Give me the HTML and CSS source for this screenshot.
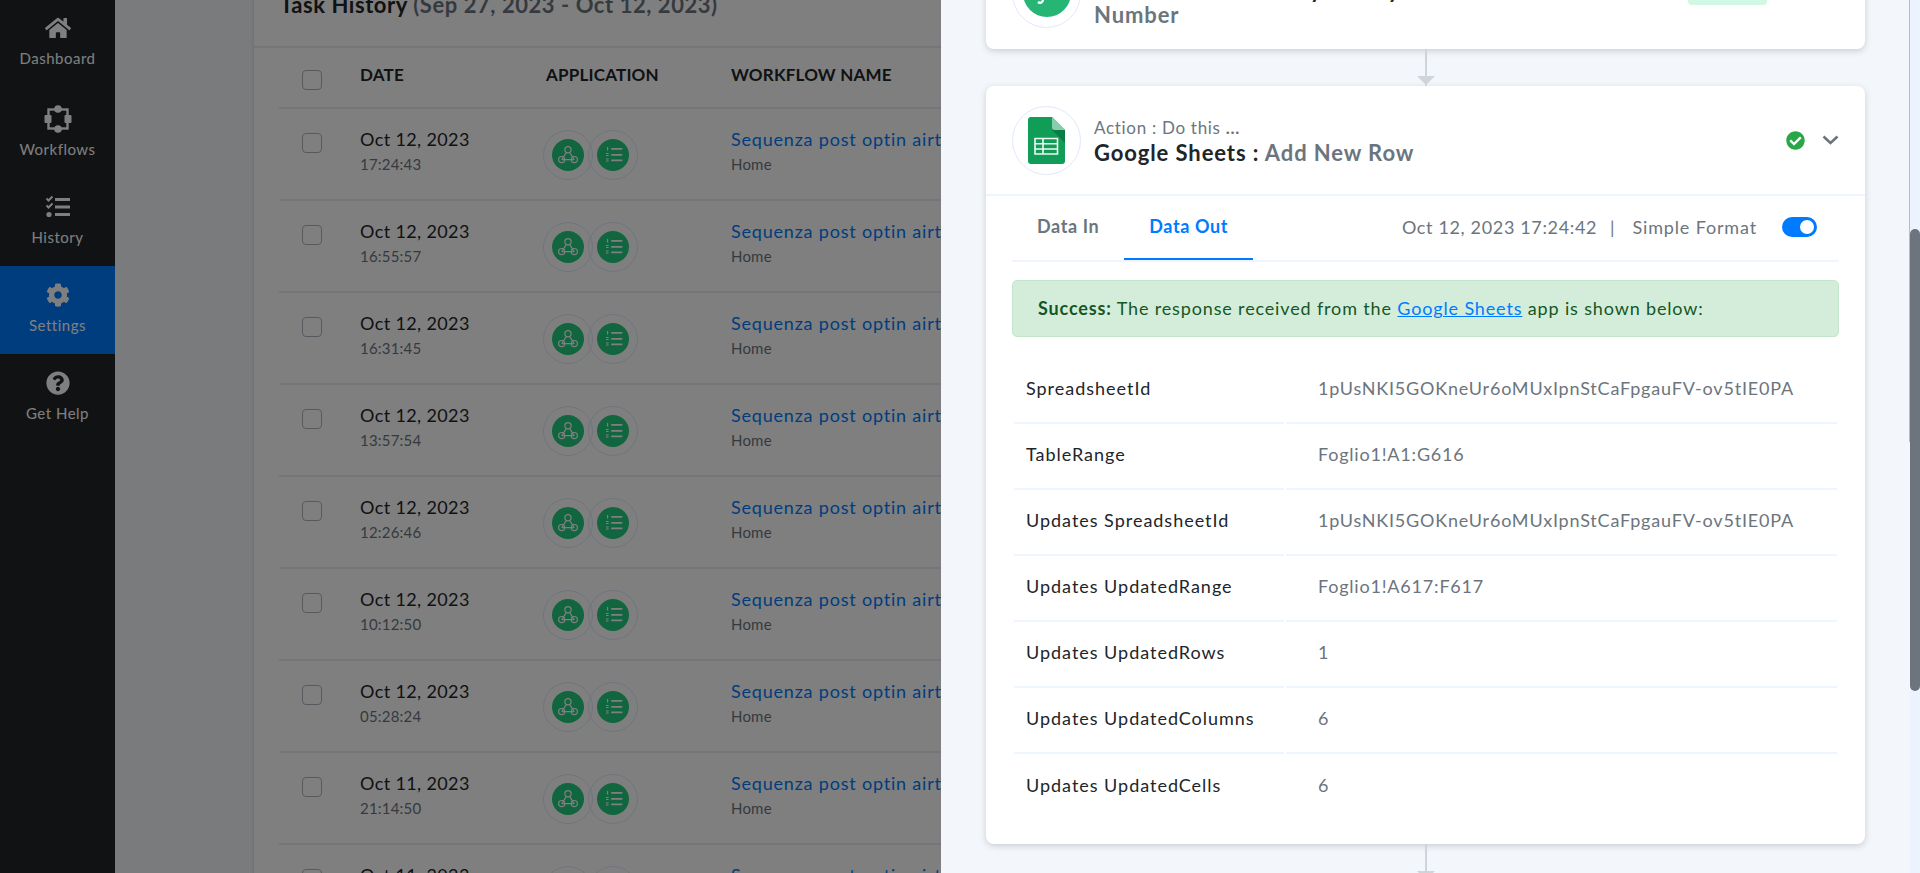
FILE: index.html
```html
<!DOCTYPE html>
<html lang="en">
<head>
    <meta charset="UTF-8">
    <meta name="viewport" content="width=device-width, initial-scale=1.0">
    <title>Task History</title>
    <link rel="stylesheet" href="styles.css">
</head>
<body>
    <svg class="defs" aria-hidden="true">
        <symbol id="i-webhook" viewBox="0 0 32 32">
            <g fill="none" stroke="currentColor" stroke-width="1.2">
                <circle cx="16" cy="10.8" r="3.1"/>
                <circle cx="9.7" cy="20.6" r="3.1"/>
                <circle cx="22.3" cy="20.6" r="3.1"/>
                <path d="M14.4 13.5 9.7 20.6M17.6 13.5 22.3 20.6M9.7 20.6H22.3"/>
            </g>
        </symbol>
        <symbol id="i-list" viewBox="0 0 32 32">
            <g fill="currentColor">
                <rect x="14" y="9" width="11.5" height="1.7" rx="0.8"/>
                <rect x="14" y="15" width="11.5" height="1.7" rx="0.8"/>
                <rect x="14" y="20.5" width="11.5" height="1.7" rx="0.8"/>
                <rect x="10" y="8" width="1.2" height="3.5"/>
                <rect x="9" y="14" width="2.6" height="1"/>
                <rect x="9" y="16" width="2.6" height="1"/>
                <rect x="9" y="19.5" width="2.6" height="1"/>
                <rect x="9" y="21.5" width="2.6" height="1"/>
            </g>
        </symbol>
    </svg>

    <div class="page">
        <nav class="sidebar">
            <a class="nav-item">
                <svg class="nav-icon home" viewBox="0 0 576 512"><path d="M280.37 148.26L96 300.11V464a16 16 0 0 0 16 16l112.06-.29a16 16 0 0 0 15.92-16V368a16 16 0 0 1 16-16h64a16 16 0 0 1 16 16v95.64a16 16 0 0 0 16 16.05L464 480a16 16 0 0 0 16-16V300L295.67 148.26a12.19 12.19 0 0 0-15.3 0zM571.6 251.47L488 182.56V44.05a12 12 0 0 0-12-12h-56a12 12 0 0 0-12 12v72.61L318.47 43a48 48 0 0 0-61 0L4.34 251.47a12 12 0 0 0-1.6 16.9l25.5 31A12 12 0 0 0 45.15 301l235.22-193.74a12.19 12.19 0 0 1 15.3 0L530.9 301a12 12 0 0 0 16.9-1.6l25.5-31a12 12 0 0 0-1.7-16.93z"/></svg>
                <span>Dashboard</span>
            </a>
            <a class="nav-item">
                <svg class="nav-icon big" viewBox="0 0 28 28">
                    <rect x="4.5" y="4.5" width="19" height="19" fill="none" stroke="currentColor" stroke-width="2.4"/>
                    <circle cx="14" cy="4" r="3.8"/>
                    <circle cx="14" cy="24" r="3.8"/>
                    <rect x="0.5" y="10" width="7" height="8" rx="1"/>
                    <rect x="20.5" y="10" width="7" height="8" rx="1"/>
                </svg>
                <span>Workflows</span>
            </a>
            <a class="nav-item">
                <svg class="nav-icon" viewBox="0 0 26 24">
                    <rect x="10" y="3" width="15" height="3"/>
                    <rect x="10" y="10.5" width="15" height="3"/>
                    <rect x="10" y="18" width="15" height="3"/>
                    <path d="M1.5 3.5 3.5 5.5 7.5 1.5M1.5 10.5 3.5 12.5 7.5 8.5" fill="none" stroke="currentColor" stroke-width="2"/>
                    <circle cx="4" cy="19.5" r="2.6"/>
                </svg>
                <span>History</span>
            </a>
            <a class="nav-item active">
                <svg class="nav-icon" viewBox="0 0 512 512"><path d="M487.4 315.7l-42.6-24.6c4.3-23.2 4.3-47 0-70.2l42.6-24.6c4.9-2.8 7.1-8.6 5.5-14-11.1-35.6-30-67.8-54.7-94.6-3.8-4.1-10-5.1-14.8-2.3L380.8 110c-17.9-15.4-38.5-27.3-60.8-35.1V25.8c0-5.6-3.9-10.5-9.4-11.7-36.7-8.2-74.3-7.8-109.2 0-5.5 1.2-9.4 6.1-9.4 11.7V75c-22.2 7.9-42.8 19.8-60.8 35.1L88.7 85.5c-4.9-2.8-11-1.9-14.8 2.3-24.7 26.7-43.6 58.9-54.7 94.6-1.7 5.4.6 11.2 5.5 14L67.3 221c-4.3 23.2-4.3 47 0 70.2l-42.6 24.6c-4.9 2.8-7.1 8.6-5.5 14 11.1 35.6 30 67.8 54.7 94.6 3.8 4.1 10 5.1 14.8 2.3l42.6-24.6c17.9 15.4 38.5 27.3 60.8 35.1v49.2c0 5.6 3.9 10.5 9.4 11.7 36.7 8.2 74.3 7.8 109.2 0 5.5-1.2 9.4-6.1 9.4-11.7v-49.2c22.2-7.9 42.8-19.8 60.8-35.1l42.6 24.6c4.9 2.8 11 1.9 14.8-2.3 24.7-26.7 43.6-58.9 54.7-94.6 1.5-5.5-.7-11.3-5.6-14.1zM256 336c-44.1 0-80-35.9-80-80s35.9-80 80-80 80 35.9 80 80-35.9 80-80 80z"/></svg>
                <span>Settings</span>
            </a>
            <a class="nav-item">
                <svg class="nav-icon" viewBox="0 0 512 512"><path d="M504 256c0 136.997-111.043 248-248 248S8 392.997 8 256C8 119.083 119.043 8 256 8s248 111.083 248 248zM262.655 90c-54.497 0-89.255 22.957-116.549 63.758-3.536 5.286-2.353 12.415 2.715 16.258l34.699 26.31c5.205 3.947 12.621 3.008 16.665-2.122 17.864-22.658 30.113-35.797 57.303-35.797 20.429 0 45.698 13.148 45.698 32.958 0 14.976-12.363 22.667-32.534 33.976C247.128 238.528 216 254.941 216 296v4c0 6.627 5.373 12 12 12h56c6.627 0 12-5.373 12-12v-1.333c0-28.462 83.186-29.647 83.186-106.667 0-58.002-60.165-102-116.531-102zM256 338c-25.365 0-46 20.635-46 46 0 25.364 20.635 46 46 46s46-20.636 46-46c0-25.365-20.635-46-46-46z"/></svg>
                <span>Get Help</span>
            </a>
        </nav>

        <main class="content">
            <section class="history-card">
                <h2 class="history-title">Task History <span>(Sep 27, 2023 - Oct 12, 2023)</span></h2>
                <div class="history-list">
                    <div class="history-row head">
                        <span class="box"></span>
                        <span>DATE</span>
                        <span class="app-head">APPLICATION</span>
                        <span>WORKFLOW NAME</span>
                    </div>

                    <div class="history-row">
                        <span class="box"></span>
                        <div><div class="date">Oct 12, 2023</div><div class="sub">17:24:43</div></div>
                        <div class="apps">
                            <span class="app"><svg class="app-dot"><use href="#i-webhook"/></svg></span>
                            <span class="app"><svg class="app-dot"><use href="#i-list"/></svg></span>
                        </div>
                        <div><a class="flow">Sequenza post optin airtable</a><div class="sub">Home</div></div>
                    </div>
                    <div class="history-row">
                        <span class="box"></span>
                        <div><div class="date">Oct 12, 2023</div><div class="sub">16:55:57</div></div>
                        <div class="apps">
                            <span class="app"><svg class="app-dot"><use href="#i-webhook"/></svg></span>
                            <span class="app"><svg class="app-dot"><use href="#i-list"/></svg></span>
                        </div>
                        <div><a class="flow">Sequenza post optin airtable</a><div class="sub">Home</div></div>
                    </div>
                    <div class="history-row">
                        <span class="box"></span>
                        <div><div class="date">Oct 12, 2023</div><div class="sub">16:31:45</div></div>
                        <div class="apps">
                            <span class="app"><svg class="app-dot"><use href="#i-webhook"/></svg></span>
                            <span class="app"><svg class="app-dot"><use href="#i-list"/></svg></span>
                        </div>
                        <div><a class="flow">Sequenza post optin airtable</a><div class="sub">Home</div></div>
                    </div>
                    <div class="history-row">
                        <span class="box"></span>
                        <div><div class="date">Oct 12, 2023</div><div class="sub">13:57:54</div></div>
                        <div class="apps">
                            <span class="app"><svg class="app-dot"><use href="#i-webhook"/></svg></span>
                            <span class="app"><svg class="app-dot"><use href="#i-list"/></svg></span>
                        </div>
                        <div><a class="flow">Sequenza post optin airtable</a><div class="sub">Home</div></div>
                    </div>
                    <div class="history-row">
                        <span class="box"></span>
                        <div><div class="date">Oct 12, 2023</div><div class="sub">12:26:46</div></div>
                        <div class="apps">
                            <span class="app"><svg class="app-dot"><use href="#i-webhook"/></svg></span>
                            <span class="app"><svg class="app-dot"><use href="#i-list"/></svg></span>
                        </div>
                        <div><a class="flow">Sequenza post optin airtable</a><div class="sub">Home</div></div>
                    </div>
                    <div class="history-row">
                        <span class="box"></span>
                        <div><div class="date">Oct 12, 2023</div><div class="sub">10:12:50</div></div>
                        <div class="apps">
                            <span class="app"><svg class="app-dot"><use href="#i-webhook"/></svg></span>
                            <span class="app"><svg class="app-dot"><use href="#i-list"/></svg></span>
                        </div>
                        <div><a class="flow">Sequenza post optin airtable</a><div class="sub">Home</div></div>
                    </div>
                    <div class="history-row">
                        <span class="box"></span>
                        <div><div class="date">Oct 12, 2023</div><div class="sub">05:28:24</div></div>
                        <div class="apps">
                            <span class="app"><svg class="app-dot"><use href="#i-webhook"/></svg></span>
                            <span class="app"><svg class="app-dot"><use href="#i-list"/></svg></span>
                        </div>
                        <div><a class="flow">Sequenza post optin airtable</a><div class="sub">Home</div></div>
                    </div>
                    <div class="history-row">
                        <span class="box"></span>
                        <div><div class="date">Oct 11, 2023</div><div class="sub">21:14:50</div></div>
                        <div class="apps">
                            <span class="app"><svg class="app-dot"><use href="#i-webhook"/></svg></span>
                            <span class="app"><svg class="app-dot"><use href="#i-list"/></svg></span>
                        </div>
                        <div><a class="flow">Sequenza post optin airtable</a><div class="sub">Home</div></div>
                    </div>
                    <div class="history-row">
                        <span class="box"></span>
                        <div><div class="date">Oct 11, 2023</div><div class="sub">20:47:12</div></div>
                        <div class="apps">
                            <span class="app"><svg class="app-dot"><use href="#i-webhook"/></svg></span>
                            <span class="app"><svg class="app-dot"><use href="#i-list"/></svg></span>
                        </div>
                        <div><a class="flow">Sequenza post optin airtable</a><div class="sub">Home</div></div>
                    </div>
                </div>
            </section>
        </main>
    </div>

    <div class="overlay"></div>

    <aside class="panel">
        <div class="panel-body">
            <section class="step first">
                <header class="step-head">
                    <span class="step-logo">
                        <svg class="trigger-logo" viewBox="0 0 48 48">
                            <circle cx="24" cy="24" r="24" fill="#26b574"/>
                            <path d="M20 26v5a3 3 0 0 1-5 2" fill="none" stroke="#fff" stroke-width="2.4"/>
                            <rect x="24" y="29" width="11" height="2" fill="#fff"/>
                        </svg>
                    </span>
                    <div class="step-text">
                        <div class="step-kind">Action : Do this <b>...</b></div>
                        <div class="step-name">Number Formatter by Pabbly : <span>Format Phone Number</span></div>
                    </div>
                    <span class="badge">Success</span>
                </header>
            </section>

            <div class="connector"></div>

            <section class="step">
                <header class="step-head bordered">
                    <span class="step-logo">
                        <svg class="sheet-logo" viewBox="0 0 37 47">
                            <path d="M3 0H24L37 13V44a3 3 0 0 1-3 3H3a3 3 0 0 1-3-3V3a3 3 0 0 1 3-3z" fill="#0f9d58"/>
                            <path d="M24 0 37 13H27a3 3 0 0 1-3-3z" fill="#87ceac"/>
                            <path d="M24 13 37 26V13z" fill="#0c7c46"/>
                            <path d="M7 21.5H29.5V37H7zM7 26.7H29.5M7 32H29.5M15 21.5V37" fill="none" stroke="#f1f8f4" stroke-width="1.6"/>
                        </svg>
                    </span>
                    <div class="step-text">
                        <div class="step-kind">Action : Do this <b>...</b></div>
                        <div class="step-name">Google Sheets : <span>Add New Row</span></div>
                    </div>
                    <svg class="status" viewBox="0 0 512 512"><path d="M504 256c0 136.967-111.033 248-248 248S8 392.967 8 256 119.033 8 256 8s248 111.033 248 248zM227.314 387.314l184-184c6.248-6.248 6.248-16.379 0-22.627l-22.627-22.627c-6.248-6.249-16.379-6.249-22.628 0L216 308.118l-70.059-70.059c-6.248-6.248-16.379-6.248-22.628 0l-22.627 22.627c-6.248 6.248-6.248 16.379 0 22.627l104 104c6.249 6.25 16.379 6.25 22.628.001z"/></svg>
                    <svg class="chevron" viewBox="0 0 17 10"><path d="M1.5 1.5 8.5 8 15.5 1.5" fill="none" stroke="currentColor" stroke-width="2.6"/></svg>
                </header>

                <div class="step-body">
                    <div class="tabs">
                        <a class="tab">Data In</a>
                        <a class="tab on">Data Out</a>
                        <div class="tabs-right">
                            <span class="stamp">Oct 12, 2023 17:24:42</span>
                            <span class="pipe">|</span>
                            <span>Simple Format</span>
                            <span class="switch"></span>
                        </div>
                    </div>

                    <div class="alert"><b>Success:</b> The response received from the <a>Google Sheets</a> app is shown below:</div>

                    <table class="data">
                        <tr><td>SpreadsheetId</td><td>1pUsNKI5GOKneUr6oMUxIpnStCaFpgauFV-ov5tIE0PA</td></tr>
                        <tr><td>TableRange</td><td>Foglio1!A1:G616</td></tr>
                        <tr><td>Updates SpreadsheetId</td><td>1pUsNKI5GOKneUr6oMUxIpnStCaFpgauFV-ov5tIE0PA</td></tr>
                        <tr><td>Updates UpdatedRange</td><td>Foglio1!A617:F617</td></tr>
                        <tr><td>Updates UpdatedRows</td><td>1</td></tr>
                        <tr><td>Updates UpdatedColumns</td><td>6</td></tr>
                        <tr><td>Updates UpdatedCells</td><td>6</td></tr>
                    </table>
                </div>
            </section>

            <div class="connector"></div>
        </div>
        <div class="panel-edge"></div>
        <div class="track"><div class="thumb"></div></div>
    </aside>
</body>
</html>
```

FILE: styles.css
```css
* {
    box-sizing: border-box;
}

html, body {
    height: 100%;
}

body {
    margin: 0;
    overflow: hidden;
    font-family: Lato, "Open Sans", sans-serif;
    font-size: 18px;
    color: #212529;
    background-color: #f3f6fa;
}

a {
    color: inherit;
    text-decoration: none;
}

.defs {
    display: none;
}

.page {
    display: flex;
    height: 100%;
}

/* left menu */
.sidebar {
    flex: 0 0 115px;
    padding-top: 2px;
    background-color: #212529;
    color: #fff;
}

.nav-item {
    display: flex;
    flex-direction: column;
    align-items: center;
    gap: 8px;
    height: 88px;
    padding-top: 17px;
    font-size: 15px;
    line-height: 20px;
    letter-spacing: 0.5px;
}

.nav-item:first-child {
    padding-top: 14px;
}

.nav-item.active {
    background-color: #007bff;
}

.nav-icon {
    width: 26px;
    height: 24px;
    fill: currentColor;
}

.nav-icon.big {
    width: 28px;
    height: 28px;
    margin: -2px 0;
}

/* task history behind the overlay */
.content {
    flex: 1;
    padding-left: 139px;
    overflow: hidden;
}

.history-card {
    margin-top: -30px;
    background-color: #fff;
    box-shadow: 0 0 4px rgba(0,0,0,0.15);
}

.history-title {
    margin: 0;
    height: 78px;
    padding: 20px 0 0 26px;
    border-bottom: 2px solid #e9ecef;
    font-size: 22px;
    line-height: 30px;
    font-weight: 700;
    letter-spacing: 0.55px;
}

.history-title span {
    color: #6c757d;
}

.history-list {
    margin-left: 25px;
}

.history-row {
    display: grid;
    grid-template-columns: 58px 183px 188px 1fr;
    height: 92px;
    padding: 18px 0 0 23px;
    border-bottom: 2px solid #e9ecef;
}

.history-row.head {
    height: 61px;
    padding-top: 17px;
    font-size: 17px;
    font-weight: 700;
    line-height: 20px;
    letter-spacing: 0.2px;
}

.app-head {
    padding-left: 3px;
}

.box {
    width: 20px;
    height: 20px;
    margin-top: 6px;
    border: 1px solid #adb5bd;
    border-radius: 4px;
    background-color: #fff;
}

.head .box {
    margin-top: 5px;
}

.date {
    font-size: 18px;
    line-height: 25px;
    letter-spacing: 0.37px;
}

.sub {
    margin-top: 2px;
    font-size: 15px;
    line-height: 20px;
    letter-spacing: 0.2px;
    color: #6c757d;
}

.apps {
    display: flex;
    margin-top: 3px;
}

.app {
    display: flex;
    align-items: center;
    justify-content: center;
    width: 50px;
    height: 50px;
    border: 1px solid #dfe8fb;
    border-radius: 50%;
}

.app + .app {
    margin-left: -5px;
}

.app-dot {
    width: 32px;
    height: 32px;
    border-radius: 50%;
    background-color: #22cc80;
    color: #fff;
}

.flow {
    display: block;
    font-size: 18px;
    line-height: 25px;
    letter-spacing: 0.8px;
    color: #007bff;
    white-space: nowrap;
}

.overlay {
    position: fixed;
    inset: 0;
    background-color: rgba(0,0,0,0.5);
}

/* side panel */
.panel {
    position: fixed;
    top: 0;
    bottom: 0;
    left: 941px;
    right: 0;
    display: flex;
    align-items: flex-start;
    background-color: #f3f6fa;
    overflow: hidden;
}

.panel-body {
    flex: 1;
    padding: 0 44px 0 45px;
}

.panel-edge {
    width: 1px;
    height: 442px;
    background-color: #b9bcbf;
}

.track {
    width: 10px;
    height: 100%;
    padding-top: 229px;
    background-color: #eaf3fe;
}

.thumb {
    height: 462px;
    border-radius: 5px;
    background-color: #6c757d;
}

.step {
    background-color: #fff;
    border-radius: 8px;
    box-shadow: 0 2px 6px rgba(108,117,125,0.3);
}

.step.first {
    margin-top: -63px;
}

.step-head {
    display: flex;
    align-items: center;
    height: 109px;
    padding: 0 26px;
}

.first .step-head {
    height: 112px;
}

.first .step-text {
    padding-bottom: 8px;
}

.step-head.bordered {
    height: 110px;
    border-bottom: 2px solid #eef5fe;
}

.step-logo {
    display: flex;
    align-items: center;
    justify-content: center;
    flex: 0 0 69px;
    height: 69px;
    border: 1px solid #dfe8fb;
    border-radius: 50%;
}

.sheet-logo {
    width: 37px;
    height: 47px;
}

.trigger-logo {
    width: 48px;
    height: 48px;
}

.step-text {
    margin-left: 13px;
    flex: 0 1 520px;
}

.step-kind {
    font-size: 17px;
    line-height: 25px;
    letter-spacing: 0.7px;
    color: #6c757d;
}

.step-name {
    font-size: 22px;
    line-height: 25px;
    font-weight: 700;
    letter-spacing: 0.9px;
}

.step-name span {
    color: #6c757d;
}

.badge {
    margin-left: auto;
    margin-right: 72px;
    width: 79px;
    height: 24px;
    border-radius: 4px;
    background-color: #d1f7e5;
    font-size: 13px;
    line-height: 24px;
    text-align: center;
    color: #1c9d63;
}

.status {
    width: 19px;
    height: 19px;
    margin-left: auto;
    fill: #28a745;
}

.chevron {
    width: 17px;
    height: 10px;
    margin-left: 17px;
    color: #6c757d;
}

.step-body {
    padding: 0 26px 24px 26px;
}

.tabs {
    display: flex;
    align-items: center;
    height: 66px;
    border-bottom: 2px solid #eef5fe;
}

.tab {
    display: flex;
    align-items: center;
    height: 64px;
    padding: 0 25px 2px;
    border-bottom: 2px solid transparent;
    font-weight: 700;
    letter-spacing: 0.6px;
    color: #6c757d;
}

.tab.on {
    border-bottom-color: #007bff;
    color: #007bff;
}

.tabs-right {
    display: flex;
    align-items: center;
    margin-left: auto;
    padding-right: 22px;
    padding-bottom: 2px;
    letter-spacing: 0.85px;
    color: #6c757d;
}

.stamp {
    letter-spacing: 0.65px;
}

.pipe {
    margin: 0 17px 0 13px;
}

.switch {
    position: relative;
    width: 35px;
    height: 20px;
    margin-left: 25px;
    border-radius: 10px;
    background-color: #007bff;
}

.switch::after {
    content: "";
    position: absolute;
    top: 3px;
    right: 3px;
    width: 14px;
    height: 14px;
    border-radius: 50%;
    background-color: #fff;
}

.alert {
    height: 57px;
    margin-top: 18px;
    padding: 0 25px;
    border: 1px solid #c3e6cb;
    border-radius: 5px;
    background-color: #d4edda;
    line-height: 55px;
    letter-spacing: 0.85px;
    color: #155724;
}

.alert a {
    color: #007bff;
    text-decoration: underline;
}

.data {
    width: 100%;
    margin-top: 21px;
    border-collapse: separate;
    border-spacing: 2px 0;
    letter-spacing: 0.98px;
}

.data td {
    height: 66px;
    padding: 0 0 4px 12px;
    border-bottom: 2px solid #eef5fe;
}

.data td:first-child {
    width: 270px;
}

.data td + td {
    padding-left: 32px;
    letter-spacing: 0.8px;
    color: #6c757d;
}

.data tr:last-child td {
    border-bottom: 0;
}

.connector {
    position: relative;
    width: 2px;
    height: 37px;
    margin: 0 auto;
    background-color: #ced4da;
}

.connector::after {
    content: "";
    position: absolute;
    bottom: 1px;
    left: -8px;
    border-top: 9px solid #ced4da;
    border-left: 9px solid transparent;
    border-right: 9px solid transparent;
}
```
